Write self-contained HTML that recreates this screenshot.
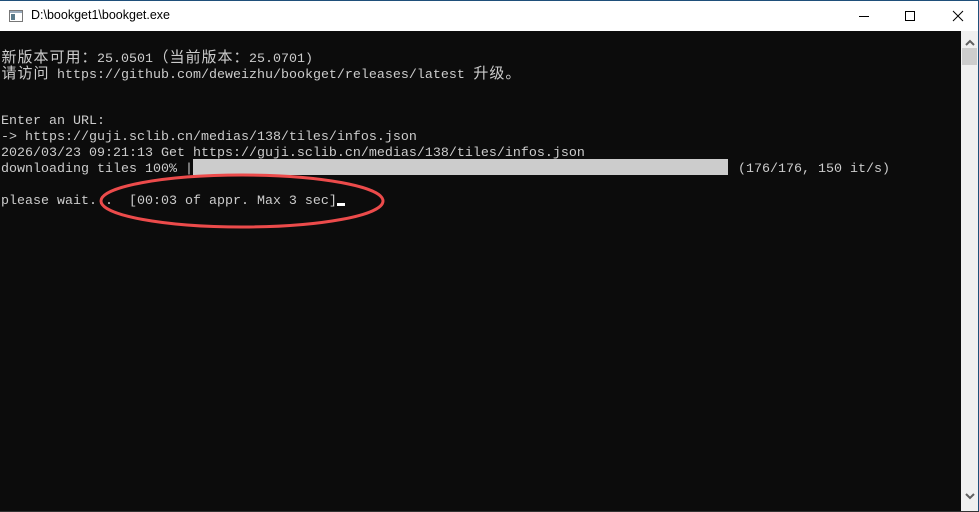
<!DOCTYPE html>
<html><head><meta charset="utf-8"><style>
body{margin:0;width:979px;height:512px;overflow:hidden;background:#0c0c0c;position:relative;font-family:"Liberation Mono",monospace}
.title{position:absolute;left:0;top:0;width:979px;height:31px;background:#fff;border-top:1px solid #1f4f7a;box-sizing:border-box}
.tt{position:absolute;left:31px;top:7px;font:12.5px "Liberation Sans",sans-serif;color:#000}
.l{position:absolute;left:1px;color:#cccccc;font-size:13.33px;line-height:16px;height:16px;white-space:pre}
.c{display:inline-block;width:16px;font-family:"Noto Sans CJK SC",sans-serif;font-size:15px;text-align:center}
.sb{position:absolute;left:961px;top:31px;width:17px;height:480px;background:#f0f0f0}
</style></head><body>
<div class="title">
<svg style="position:absolute;left:9px;top:9px" width="14" height="12"><rect x="0.5" y="0.5" width="13" height="11" fill="#fff" stroke="#777"/><rect x="1" y="1" width="12" height="2" fill="#9ab"/><rect x="2" y="4" width="4" height="6" fill="#5a7a8a"/></svg>
<div class="tt">D:\bookget1\bookget.exe</div>
<svg style="position:absolute;left:858px;top:8px" width="110" height="16" stroke="#000" fill="none" stroke-width="1"><line x1="1" y1="7.5" x2="11" y2="7.5"/><rect x="47.5" y="2.5" width="9" height="9"/><path d="M95 2L105 12M105 2L95 12"/></svg>
</div>
<div class="l" style="top:49px"><span class="c">新</span><span class="c">版</span><span class="c">本</span><span class="c">可</span><span class="c">用</span><span class="c">：</span>25.0501<span class="c">（</span><span class="c">当</span><span class="c">前</span><span class="c">版</span><span class="c">本</span><span class="c">：</span>25.0701)</div>
<div class="l" style="top:65px"><span class="c">请</span><span class="c">访</span><span class="c">问</span> https://github.com/deweizhu/bookget/releases/latest <span class="c">升</span><span class="c">级</span><span class="c">。</span></div>
<div class="l" style="top:114px">Enter an URL:</div>
<div class="l" style="top:130px">-&gt; https://guji.sclib.cn/medias/138/tiles/infos.json</div>
<div class="l" style="top:146px">2026/03/23 09:21:13 Get https://guji.sclib.cn/medias/138/tiles/infos.json</div>
<div class="l" style="top:162px">downloading tiles 100% |</div>
<div style="position:absolute;left:193px;top:159px;width:535px;height:16px;background:#cccccc"></div>
<div class="l" style="top:162px;left:738px">(176/176, 150 it/s)</div>
<div class="l" style="top:194px">please wait...  [00:03 of appr. Max 3 sec]</div>
<div style="position:absolute;left:337px;top:203px;width:8px;height:3px;background:#fff"></div>
<svg style="position:absolute;left:0;top:0" width="979" height="512"><ellipse cx="242" cy="201" rx="141" ry="26" fill="none" stroke="#ec4b4b" stroke-width="3"/></svg>
<div class="sb">
<svg style="position:absolute;left:4px;top:8px" width="10" height="8"><path d="M1 6L5 2L9 6" stroke="#606060" stroke-width="2" fill="none"/></svg>
<div style="position:absolute;left:1px;top:17px;width:15px;height:17px;background:#cdcdcd"></div>
<svg style="position:absolute;left:4px;top:461px" width="10" height="8"><path d="M1 2L5 6L9 2" stroke="#606060" stroke-width="2" fill="none"/></svg>
</div>
<div style="position:absolute;left:978px;top:0;width:1px;height:512px;background:#1f4f7a"></div>
<div style="position:absolute;left:0;top:511px;width:979px;height:1px;background:#333"></div>
</body></html>
